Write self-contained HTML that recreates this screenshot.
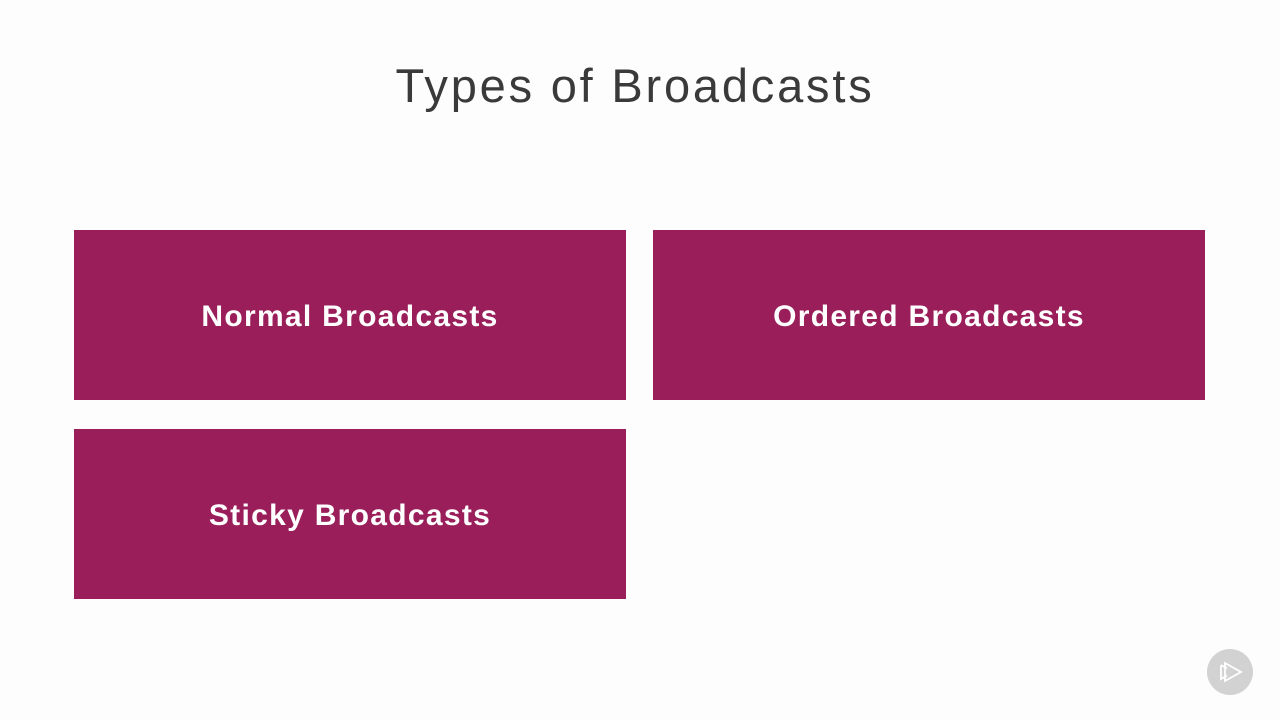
<!DOCTYPE html>
<html><head><style>
body{margin:0;width:1280px;height:720px;background:#fdfdfd;position:relative;overflow:hidden;font-family:"Liberation Sans",sans-serif}
h1{position:absolute;top:58px;left:0;width:1270px;text-align:center;margin:0;font-weight:300;font-size:47px;color:#3a3a3a;letter-spacing:2.8px}
.b{position:absolute;width:552px;height:170px;background:#991e5a;color:#fff;font-size:30px;font-weight:bold;display:flex;align-items:center;justify-content:center;letter-spacing:1.3px;box-sizing:border-box;padding-top:4px}
.logo{position:absolute;left:1207px;top:649px;width:46px;height:46px;border-radius:50%;background:#d2d2d2}
</style></head><body>
<h1>Types of Broadcasts</h1>
<div class="b" style="left:74px;top:230px">Normal Broadcasts</div>
<div class="b" style="left:653px;top:230px">Ordered Broadcasts</div>
<div class="b" style="left:74px;top:429px">Sticky Broadcasts</div>
<div class="logo"><svg width="46" height="46" viewBox="0 0 46 46"><path d="M18 14V32L34 23Z M14 16V30L20 26.5 M14 16L20 19.5" fill="none" stroke="#fff" stroke-width="1.8" stroke-linejoin="miter"/></svg></div>
</body></html>
